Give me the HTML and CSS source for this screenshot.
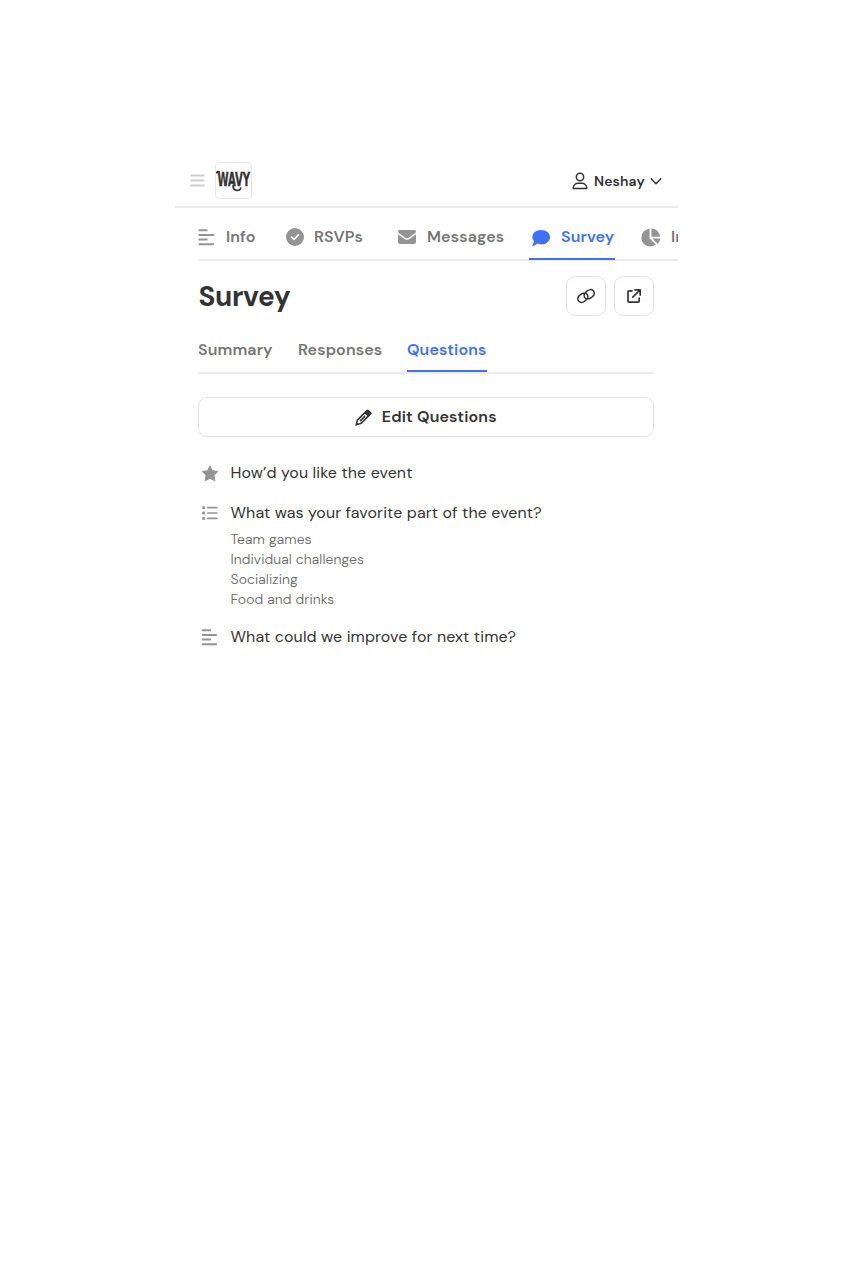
FILE: index.html
```
<!DOCTYPE html>
<html lang="en">
<head>
<meta charset="utf-8">
<title>Survey</title>
<link rel="stylesheet" href="styles.css">
</head>
<body>
<div class="app">
  <header class="topbar">
    <svg class="menu" width="15" height="15" viewBox="0 0 15 15" fill="none" stroke="#cfcfcf" stroke-width="1.8" stroke-linecap="round"><path d="M1.3 2.5H13.7M1.3 7.5H13.7M1.3 12.5H13.7"/></svg>
    <div class="logo">
      <svg width="35" height="35" viewBox="0 0 35 35"><g transform="translate(1.4 23.2) scale(.56 1)"><text class="wordmark" x="0" y="0">WAVY</text></g><path d="M17.2 22.5V23.4C17.2 28 24.4 28.6 24.6 25.2M.8 9.7Q.8 8.6 3 8.7" fill="none" stroke="#333" stroke-width="1.8" stroke-linecap="round"/></svg>
    </div>
    <div class="user">
      <svg width="16" height="18" viewBox="0 0 16 18" fill="none" stroke="#333" stroke-width="1.5" stroke-linejoin="round"><circle cx="8" cy="5" r="3.7"/><path d="M1.2 16.4C1.2 13 3.7 11.3 6.5 11.3H9.5C12.3 11.3 14.8 13 14.8 16.4Z"/></svg>
      <span class="name">Neshay</span>
      <svg width="12" height="8" viewBox="0 0 12 8" fill="none" stroke="#333" stroke-width="1.5" stroke-linecap="round" stroke-linejoin="round"><path d="M1.3 1.9L6 6.7L10.7 1.9"/></svg>
    </div>
  </header>
  <nav class="tabs">
    <a class="tab info"><svg width="18" height="18" viewBox="0 0 18 18" fill="none" stroke="#949494" stroke-width="2" stroke-linecap="round"><path d="M1.4 2.2H8.7M1.4 6.9H15.4M1.4 11.6H8.7M1.4 16.3H15.4"/></svg><span class="label">Info</span></a>
    <a class="tab rsvps"><svg width="18" height="18" viewBox="0 0 18 18"><circle cx="9" cy="9" r="9" fill="#949494"/><path d="M5.6 9.2L8 11.5L12.4 6.9" fill="none" stroke="#fff" stroke-width="1.7" stroke-linecap="round" stroke-linejoin="round"/></svg><span class="label">RSVPs</span></a>
    <a class="tab messages"><svg width="18" height="14" viewBox="0 0 18 14" fill="#949494"><path d="M1.7 0H16.3C17.4 0 18 .7 18 1.7Q18 2.4 17.3 3L10.3 7.9Q9 8.8 7.7 7.9L.7 3Q0 2.4 0 1.7C0 .7.6 0 1.7 0Z"/><path d="M0 4.2L7 9.2Q9 10.5 11 9.2L18 4.2V12C18 13.2 17.2 14 16 14H2C.8 14 0 13.2 0 12Z"/></svg><span class="label">Messages</span></a>
    <a class="tab survey active"><svg width="18" height="17" viewBox="0 0 18 17" fill="#4070f4"><path d="M9.2 1.1C14.2 1.1 18 4.2 18 8.2S14.2 15.4 9.2 15.4Q7 15.4 5.2 14.6Q3.4 16.7.7 16.9Q0 16.7.4 16.2Q1.9 14.5 2 12.3Q.3 10.5.3 8.2C.3 4.2 4.2 1.1 9.2 1.1Z"/></svg><span class="label">Survey</span></a>
    <a class="tab insights"><svg width="20" height="19" viewBox="0 0 20 19" fill="#949494"><path d="M8.5.8V10.2L14.8 16.5C13.2 17.8 11.3 18.5 9.2 18.5C4.3 18.5.4 14.6.4 9.7C.4 5 4 1.2 8.5.8Z"/><path d="M10.5.4C15 .7 18.6 4 19 8.7H10.5Z"/><path d="M11.3 10.4H19.3C19 12.5 18.1 14.4 16.5 15.7Z"/></svg><span class="label">In</span></a>
  </nav>
  <main class="content">
    <div class="heading">
      <h1>Survey</h1>
      <button class="square"><svg width="20" height="16" viewBox="0 0 20 16" fill="none" stroke="#333" stroke-width="1.5" stroke-linecap="round"><path d="M10.4 11C7.8 9.8 7.4 6.6 9.2 4.8L11.4 2.8C13 1.4 15.6 1.1 17.2 2.7C18.8 4.4 18.5 6.7 17 8.1L15.1 9.7C14.1 10.5 12.9 10.9 12 10.7"/><path d="M9.6 5C12.2 6.2 12.6 9.4 10.8 11.2L8.6 13.2C7 14.6 4.4 14.9 2.8 13.3C1.2 11.6 1.5 9.3 3 7.9L4.9 6.3C5.9 5.5 7.1 5.1 8 5.3"/></svg></button>
      <button class="square"><svg width="16" height="16" viewBox="0 0 16 16" fill="none" stroke="#333" stroke-width="1.7" stroke-linecap="round" stroke-linejoin="round"><path d="M6 2.8H3.2Q2 2.8 2 4V13Q2 14.2 3.2 14.2H12Q13.2 14.2 13.2 13V10M9 1.8H14.2V7M14 2L6.8 9.2"/></svg></button>
    </div>
    <nav class="subtabs">
      <a class="sub summary">Summary</a><a class="sub responses">Responses</a><a class="sub questions active">Questions</a>
    </nav>
    <button class="edit">
      <svg width="17" height="17" viewBox="0 0 17 17"><path d="M.3 16.7L1.8 10.4L11.4.9Q12.6-.1 13.8.9L16.1 3.2Q17.2 4.4 16.1 5.6L6.6 15.1Z" fill="#333"/><path d="M3.2 11.5L9.9 4.8L12.2 7.1L5.5 13.8L2.2 14.7Z" fill="#fff"/><path d="M5.5 11.6L9.7 7.4" stroke="#333" stroke-width="1.5" stroke-linecap="round"/><path d="M.5 16.5L1.8 13.6L3.5 15.3Z" fill="#333"/></svg>
      <span class="label">Edit Questions</span>
    </button>
    <section class="list">
      <div class="question"><span class="icon"><svg width="18" height="17" viewBox="0 0 18 17" fill="#949494" stroke="#949494" stroke-linejoin="round"><path d="M9 .8L11.4 5.7L16.8 6.5L12.9 10.3L13.8 15.8L9 13.2L4.2 15.8L5.1 10.3L1.2 6.5L6.6 5.7Z"/></svg></span><p class="q">How’d you like the event</p></div>
      <div class="question"><span class="icon"><svg width="18" height="16" viewBox="0 0 18 16" fill="#949494"><rect x="1.2" y="1.2" width="2.8" height="2.8" rx=".6"/><rect x="1.2" y="6.6" width="2.8" height="2.8" rx=".6"/><rect x="1.2" y="12" width="2.8" height="2.8" rx=".6"/><path d="M6.8 2.6H15.8M6.8 8H15.8M6.8 13.4H15.8" stroke="#949494" stroke-width="1.7" stroke-linecap="round"/></svg></span><p class="q">What was your favorite part of the event?</p></div>
      <ul class="options"><li>Team games</li><li>Individual challenges</li><li>Socializing</li><li>Food and drinks</li></ul>
      <div class="question"><span class="icon"><svg width="18" height="18" viewBox="0 0 18 18" fill="none" stroke="#949494" stroke-width="2" stroke-linecap="round"><path d="M1.7 2.2H9.2M1.7 6.9H15.2M1.7 11.6H9.2M1.7 16.3H15.2"/></svg></span><p class="q">What could we improve for next time?</p></div>
    </section>
  </main>
</div>
</body>
</html>
```
FILE: styles.css
```
* { box-sizing: border-box; }
body { margin: 0; background: #fff; color: #333; font-family: "DM Sans", Inter, sans-serif; font-variation-settings: "opsz" 14; }
svg { display: block; flex: none; }
button { background: #fff; border: 1px solid #e4e4e4; color: #333; font-family: inherit; font-variation-settings: inherit; padding: 0; display: flex; align-items: center; justify-content: center; }
.app { width: 503px; margin: 154px 0 0 175px; overflow: hidden; }
.topbar { height: 54px; border-bottom: 2px solid #ebebeb; display: flex; align-items: center; padding: 1px 16px 0 15px; }
.menu { margin-right: 10px; }
.logo { width: 37px; height: 37px; border: 1px solid #e8e8e8; border-radius: 4px; }
.wordmark { font: bold 20px "DejaVu Sans Condensed", "DejaVu Sans", sans-serif; fill: #333; stroke: #333; stroke-width: .4px; }
.user { display: flex; align-items: center; margin-left: auto; }
.name { font-size: 14px; font-weight: 600; letter-spacing: .1px; width: 51px; margin: 0 5px 0 6px; white-space: nowrap; }
.tabs { margin-left: 23px; height: 53px; display: flex; align-items: flex-start; box-shadow: inset 0 -2px #ebebeb; }
.tab { height: 52px; display: flex; align-items: center; flex: none; gap: 10px; font-size: 16px; font-weight: 600; color: #757575; padding-top: 6px; white-space: nowrap; }
.label { letter-spacing: .14px; padding-bottom: 2px; }
.tab.info { width: 88px; }
.tab.rsvps { width: 112px; }
.tab.messages { width: 131px; gap: 11px; }
.tab.survey { width: 86px; padding-left: 3px; gap: 11px; margin-right: 26px; }
.tab.active, .sub.active { color: #4070f4; box-shadow: inset 0 -2px #4070f4; }
.content { width: 455.5px; margin-left: 23px; }
.heading { height: 70px; display: flex; align-items: center; gap: 8px; }
h1 { margin: 2px auto 0 .4px; font-size: 28px; letter-spacing: -.3px; font-weight: 700; line-height: 36px; }
.square { width: 40px; height: 40px; border-radius: 9px; }
.subtabs { height: 43px; display: flex; gap: 25px; border-bottom: 2px solid #ebebeb; font-size: 16px; font-weight: 600; letter-spacing: .12px; color: #757575; }
.sub { padding-top: 9px; line-height: 20px; white-space: nowrap; }
.summary { width: 75px; }
.responses { width: 84px; }
.questions { width: 80px; }
.edit { width: 100%; height: 40px; margin-top: 23px; border-radius: 9px; gap: 10px; font-size: 16px; font-weight: 600; }
.list { padding-top: 24px; }
.question { height: 24px; display: flex; align-items: center; margin-bottom: 16px; }
.icon { width: 32.5px; padding-left: 3.4px; }
.q { margin: 0; padding-bottom: 2px; font-size: 16px; font-weight: 400; letter-spacing: .11px; white-space: nowrap; }
.options { list-style: none; margin: -12px 0 16px; padding: 0 0 0 32.5px; font-size: 14px; font-weight: 300; line-height: 20px; letter-spacing: .1px; color: #666; }
```
